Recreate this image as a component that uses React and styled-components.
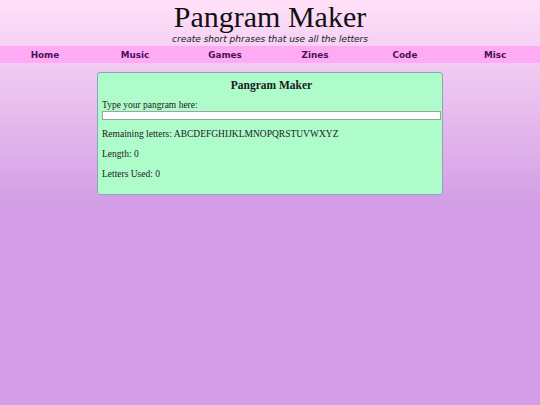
import React, { useState } from 'react';
import styled, { createGlobalStyle } from 'styled-components';

const GlobalStyle = createGlobalStyle`
  html, body {
    margin: 0;
    padding: 0;
    min-height: 100%;
  }
  body {
    background: linear-gradient(to bottom, #ffe0f8 0px, #d39ee5 205px, #d39ee5 100%) no-repeat;
    background-color: #d39ee5;
    min-height: 405px;
  }
`;

const Page = styled.div`
  min-height: 405px;
`;

const Header = styled.header`
  text-align: center;
  padding-top: 1px;
`;

const Title = styled.h1`
  margin: 0;
  font-family: "Liberation Serif", serif;
  font-weight: normal;
  font-size: 30px;
  line-height: 32px;
  color: #111;
`;

const Tagline = styled.p`
  margin: 0;
  font-family: "DejaVu Sans", Verdana, sans-serif;
  font-style: italic;
  font-size: 9px;
  line-height: 13px;
  color: #222;
`;

const Nav = styled.nav`
  display: grid;
  grid-template-columns: repeat(6, 1fr);
  background: #ffaaf4;
  height: 17px;
  align-items: center;
`;

const NavLink = styled.a`
  text-align: center;
  font-family: "DejaVu Sans", Verdana, sans-serif;
  font-weight: bold;
  font-size: 8.8px;
  color: #4a1258;
  text-decoration: none;
`;

const Card = styled.main`
  width: 339px;
  margin: 9px auto 0;
  padding: 4px 1px 14px 4px;
  background: #affccb;
  border: 1px solid #8aa6bd;
  border-radius: 3px;
  font-family: "Liberation Serif", Georgia, serif;
  font-size: 9.5px;
  color: #1a1a1a;
`;

const CardTitle = styled.h2`
  margin: 2px 0 9px;
  text-align: center;
  font-size: 11.5px;
  font-weight: bold;
`;

const Label = styled.label`
  display: block;
  line-height: 11px;
`;

const Input = styled.input`
  display: block;
  box-sizing: border-box;
  width: 100%;
  height: 9px;
  margin: 0;
  padding: 0;
  border: 1px solid #a0a0a0;
  background: #fff;
`;

const Stat = styled.p`
  margin: 0;
  margin-top: 9px;
  line-height: 11px;
`;

const letters = 'ABCDEFGHIJKLMNOPQRSTUVWXYZ';
const links = ['Home', 'Music', 'Games', 'Zines', 'Code', 'Misc'];

const App = () => {
  const [text, setText] = useState('');
  const upper = text.toUpperCase();
  const remaining = letters.split('').filter((l) => !upper.includes(l)).join('');
  const used = letters.length - remaining.length;

  return (
    <>
      <GlobalStyle />
      <Page>
        <Header>
          <Title>Pangram Maker</Title>
          <Tagline>create short phrases that use all the letters</Tagline>
        </Header>
        <Nav>
          {links.map((link) => (
            <NavLink key={link} href="#">{link}</NavLink>
          ))}
        </Nav>
        <Card>
          <CardTitle>Pangram Maker</CardTitle>
          <Label htmlFor="pangram">Type your pangram here:</Label>
          <Input id="pangram" value={text} onChange={(e) => setText(e.target.value)} />
          <Stat>Remaining letters: {remaining}</Stat>
          <Stat>Length: {text.length}</Stat>
          <Stat>Letters Used: {used}</Stat>
        </Card>
      </Page>
    </>
  );
};

export default App;
